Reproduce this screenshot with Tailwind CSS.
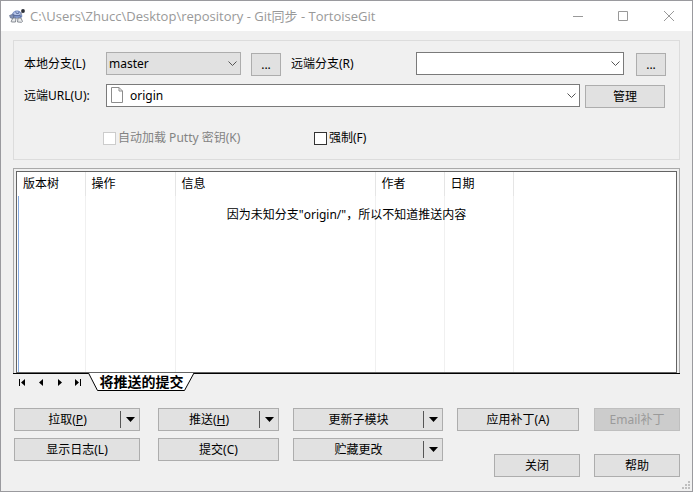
<!DOCTYPE html>
<html lang="zh-CN">
<head>
<meta charset="utf-8">
<title>Git同步 - TortoiseGit</title>
<script src="https://cdn.jsdelivr.net/npm/@tailwindcss/browser@4"></script>
</head>
<body class="min-h-screen flex flex-col bg-[#f0f0f0] border border-[#9a9a9e] text-black text-[12px] leading-[16px] font-['Noto_Sans','Noto_Sans_CJK_SC',sans-serif] whitespace-nowrap">

<header class="h-[30px] bg-white flex items-center pl-2 text-[#999999]">
  <svg class="w-4 h-4 mr-[5px]" viewBox="0 0 16 16" aria-hidden="true">
    <path d="M2.500 9.500C2.500 5 5 2.500 8 2.500c3.200 0 5.300 2.500 5.300 6L11.500 10.500H4z" fill="#7d93c8"/>
    <path d="M4 5.500l2.500-2 3 .2 2 1.800-1.500 2H5.500z" fill="#b4c4e8"/>
    <path d="M3 9l2.500-1.500h5L12.500 9M5.500 7.500L4 5.500M10.500 7.500l1.500-2M6.500 3.500l1 2h2l.5-2" fill="none" stroke="#4f5f90" stroke-width=".8"/>
    <path d="M.5 7.500l2.500-1 2 1.500L4 10.500l-2.500-.5z" fill="#8393b8" stroke="#45506f" stroke-width=".5"/>
    <path d="M2 13.500l2-3.500h3l-.5 4H3zM8.500 14l.5-4h3l1.500 3.500-1 .8z" fill="#e8eaec" stroke="#70757e" stroke-width=".8"/>
    <path d="M11.500 7l2-3.500" stroke="#a8acb8" stroke-width="1.300"/>
    <circle cx="14" cy="3" r="1.900" fill="#2d3038"/>
  </svg>
  <h1 class="flex-1 text-[13px] font-['Open_Sans','Noto_Sans_CJK_SC',sans-serif]">C:\Users\Zhucc\Desktop\repository - Git同步 - TortoiseGit</h1>
  <button class="w-[45px] h-full flex items-center justify-center" aria-label="最小化"><svg class="w-[10px] h-[10px]" viewBox="0 0 10 10" fill="none" stroke="#999"><path d="M0 5.500h10"/></svg></button>
  <button class="w-[46px] h-full flex items-center justify-center" aria-label="最大化"><svg class="w-[10px] h-[10px]" viewBox="0 0 10 10" fill="none" stroke="#999"><path d="M.5.500h9v9h-9z"/></svg></button>
  <button class="w-[46px] h-full flex items-center justify-center" aria-label="关闭窗口"><svg class="w-[10px] h-[10px]" viewBox="0 0 10 10" fill="none" stroke="#999"><path d="M0 0l10 10M10 0L0 10"/></svg></button>
</header>

<main class="flex-1 flex flex-col px-3 pt-[9px]">
  <section class="h-[120px] border border-[#dcdcdc] pl-[10px] pt-[11px] pr-[13px]">
    <div class="flex items-center h-6">
      <label for="local" class="w-[82px]">本地分支(L)</label>
      <div class="relative w-[135px] self-start">
        <select id="local" class="appearance-none w-full h-[23px] block bg-[#e1e1e1] border border-[#adadad] pl-[2px]"><option>master</option></select>
        <svg class="absolute right-1 top-[9px] w-[9px] h-[6px] pointer-events-none" viewBox="0 0 9 6" fill="none" stroke="#555"><path d="M.5.500l4 4 4-4"/></svg>
      </div>
      <button class="ml-[10px] w-[30px] h-[23px] self-end bg-[#e1e1e1] border border-[#adadad]">...</button>
      <label for="remote" class="ml-[10px] w-[125px]">远端分支(R)</label>
      <div class="relative flex-1 self-start">
        <select id="remote" class="appearance-none w-full h-[23px] block bg-white border border-[#7a7a7a] pl-[2px]"><option></option></select>
        <svg class="absolute right-1 top-[9px] w-[9px] h-[6px] pointer-events-none" viewBox="0 0 9 6" fill="none" stroke="#555"><path d="M.5.500l4 4 4-4"/></svg>
      </div>
      <button class="ml-3 w-[30px] h-[23px] self-end bg-[#e1e1e1] border border-[#adadad]">...</button>
    </div>
    <div class="flex items-center h-6 mt-2 pr-px">
      <label for="url" class="w-[82px]">远端URL(U):</label>
      <div class="relative flex-1 self-start">
        <select id="url" class="appearance-none w-full h-[23px] block bg-white border border-[#7a7a7a] pl-[23px]"><option>origin</option></select>
        <svg class="absolute left-[5px] top-[3px] w-3 h-4 pointer-events-none" viewBox="0 0 12 16" fill="#fff" stroke="#8c8c8c"><path d="M.5.500h7.500l3.500 3.500v11.500H.5z"/><path d="M8 .5v3.500h3.500" fill="none"/></svg>
        <svg class="absolute right-1 top-[9px] w-[9px] h-[6px] pointer-events-none" viewBox="0 0 9 6" fill="none" stroke="#555"><path d="M.5.500l4 4 4-4"/></svg>
      </div>
      <button class="ml-[5px] w-20 h-[23px] self-end bg-[#e1e1e1] border border-[#adadad]">管理</button>
    </div>
    <div class="flex items-center mt-[22px]">
      <label class="ml-[79px] w-[211px] flex items-center gap-[2px] text-[#838383]"><input type="checkbox" disabled class="appearance-none w-[13px] h-[13px] bg-white border border-[#cccccc]">自动加载 Putty 密钥(K)</label>
      <label class="flex items-center gap-[2px]"><input type="checkbox" class="appearance-none w-[13px] h-[13px] bg-white border border-[#333333]">强制(F)</label>
    </div>
  </section>

  <section class="relative mt-2 flex-1 min-h-[205px] flex border border-b-0 border-[#a9a9a9] p-[2px] pb-0">
    <div class="relative flex-1 flex border border-[#646464] bg-white">
      <table class="table-fixed w-full text-left">
        <colgroup><col class="w-[68px]"><col class="w-[90px]"><col class="w-[200px]"><col class="w-[69px]"><col class="w-[69px]"><col></colgroup>
        <thead>
          <tr class="h-6">
            <th class="font-normal border-r border-[#e5e5e5] pl-[6px]">版本树</th>
            <th class="font-normal border-r border-[#e5e5e5] pl-[6px]">操作</th>
            <th class="font-normal border-r border-[#e5e5e5] pl-[6px]">信息</th>
            <th class="font-normal border-r border-[#e5e5e5] pl-[6px]">作者</th>
            <th class="font-normal border-r border-[#e5e5e5] pl-[6px]">日期</th>
            <th></th>
          </tr>
        </thead>
        <tbody>
          <tr>
            <td class="border-r border-[#f0f0f0] h-full"></td>
            <td class="border-r border-[#f0f0f0]"></td>
            <td class="border-r border-[#f0f0f0]"></td>
            <td class="border-r border-[#f0f0f0]"></td>
            <td class="border-r border-[#f0f0f0]"></td>
            <td></td>
          </tr>
        </tbody>
      </table>
      <div class="absolute left-px top-6 bottom-0 w-px bg-[#84a9e0]"></div>
      <p class="absolute inset-x-0 top-[35px] text-center">因为未知分支"origin/"，所以不知道推送内容</p>
    </div>
  </section>

  <nav class="border-t border-black h-[18px] flex items-start">
    <div class="flex items-center h-4 pl-[6px] gap-[10px]">
      <button aria-label="第一个"><svg class="w-2 h-[7px]" viewBox="0 0 8 7"><path d="M0 0h1v7H0zM6 0v7L2 3.500z"/></svg></button>
      <button aria-label="上一个"><svg class="w-2 h-[7px]" viewBox="0 0 8 7"><path d="M6 0v7L2 3.500z"/></svg></button>
      <button aria-label="下一个"><svg class="w-2 h-[7px]" viewBox="0 0 8 7"><path d="M3 0v7l4-3.500z"/></svg></button>
      <button aria-label="最后一个"><svg class="w-2 h-[7px]" viewBox="0 0 8 7"><path d="M7 0h1v7H7zM2 0v7l4-3.500z"/></svg></button>
    </div>
    <button class="relative ml-[7px] -mt-px w-[107px] h-[18px] font-bold text-[14px] leading-[16px]">
      <svg class="absolute inset-0 w-full h-full" viewBox="0 0 107 18" fill="#fff" stroke="#000"><path d="M.5 0l9 17.500h87L106 0"/></svg>
      <span class="relative">将推送的提交</span>
    </button>
  </nav>

  <footer class="relative flex pl-px h-[100px] pt-[17px]">
    <div class="flex-1 grid grid-cols-[126fr_121fr_150fr] auto-rows-[23px] gap-y-[7px]">
      <div class="flex border border-[#adadad] bg-[#e1e1e1]"><button class="flex-1">拉取(<u>P</u>)</button><button class="my-[2px] w-[19px] border-l border-[#555] flex items-center justify-center" aria-label="拉取选项"><svg class="w-[9px] h-[5px]" viewBox="0 0 9 5"><path d="M0 0h9L4.500 5z"/></svg></button></div>
      <div class="ml-[18px] -mr-[18px] flex border border-[#adadad] bg-[#e1e1e1]"><button class="flex-1">推送(<u>H</u>)</button><button class="my-[2px] w-[19px] border-l border-[#555] flex items-center justify-center" aria-label="推送选项"><svg class="w-[9px] h-[5px]" viewBox="0 0 9 5"><path d="M0 0h9L4.500 5z"/></svg></button></div>
      <div class="ml-8 -mr-8 flex border border-[#adadad] bg-[#e1e1e1]"><button class="flex-1">更新子模块</button><button class="my-[2px] w-[19px] border-l border-[#555] flex items-center justify-center" aria-label="更新选项"><svg class="w-[9px] h-[5px]" viewBox="0 0 9 5"><path d="M0 0h9L4.500 5z"/></svg></button></div>
      <button class="border border-[#adadad] bg-[#e1e1e1]">显示日志(L)</button>
      <button class="ml-[18px] -mr-[18px] border border-[#adadad] bg-[#e1e1e1]">提交(C)</button>
      <div class="ml-8 -mr-8 flex border border-[#adadad] bg-[#e1e1e1]"><button class="flex-1">贮藏更改</button><button class="my-[2px] w-[19px] border-l border-[#555] flex items-center justify-center" aria-label="贮藏选项"><svg class="w-[9px] h-[5px]" viewBox="0 0 9 5"><path d="M0 0h9L4.500 5z"/></svg></button></div>
    </div>
    <div class="ml-[46px] flex flex-col gap-[23px]">
      <div class="flex gap-[15px]">
        <button class="w-[122px] h-[23px] border border-[#adadad] bg-[#e1e1e1]">应用补丁(A)</button>
        <button disabled class="w-[86px] h-[23px] border border-[#bfbfbf] bg-[#cccccc] text-[#9a9a9a]">Email补丁</button>
      </div>
      <div class="flex gap-[14px] justify-end">
        <button class="w-[86px] h-[23px] border border-[#adadad] bg-[#e1e1e1]">关闭</button>
        <button class="w-[86px] h-[23px] border border-[#adadad] bg-[#e1e1e1]">帮助</button>
      </div>
    </div>
    <svg class="absolute -right-[10px] bottom-[2px] w-2 h-2" viewBox="0 0 8 8" fill="#bfbfbf" aria-hidden="true"><path d="M6 0h2v2H6zM3 3h2v2H3zM6 3h2v2H6zM0 6h2v2H0zM3 6h2v2H3zM6 6h2v2H6z"/></svg>
  </footer>
</main>
</body>
</html>
